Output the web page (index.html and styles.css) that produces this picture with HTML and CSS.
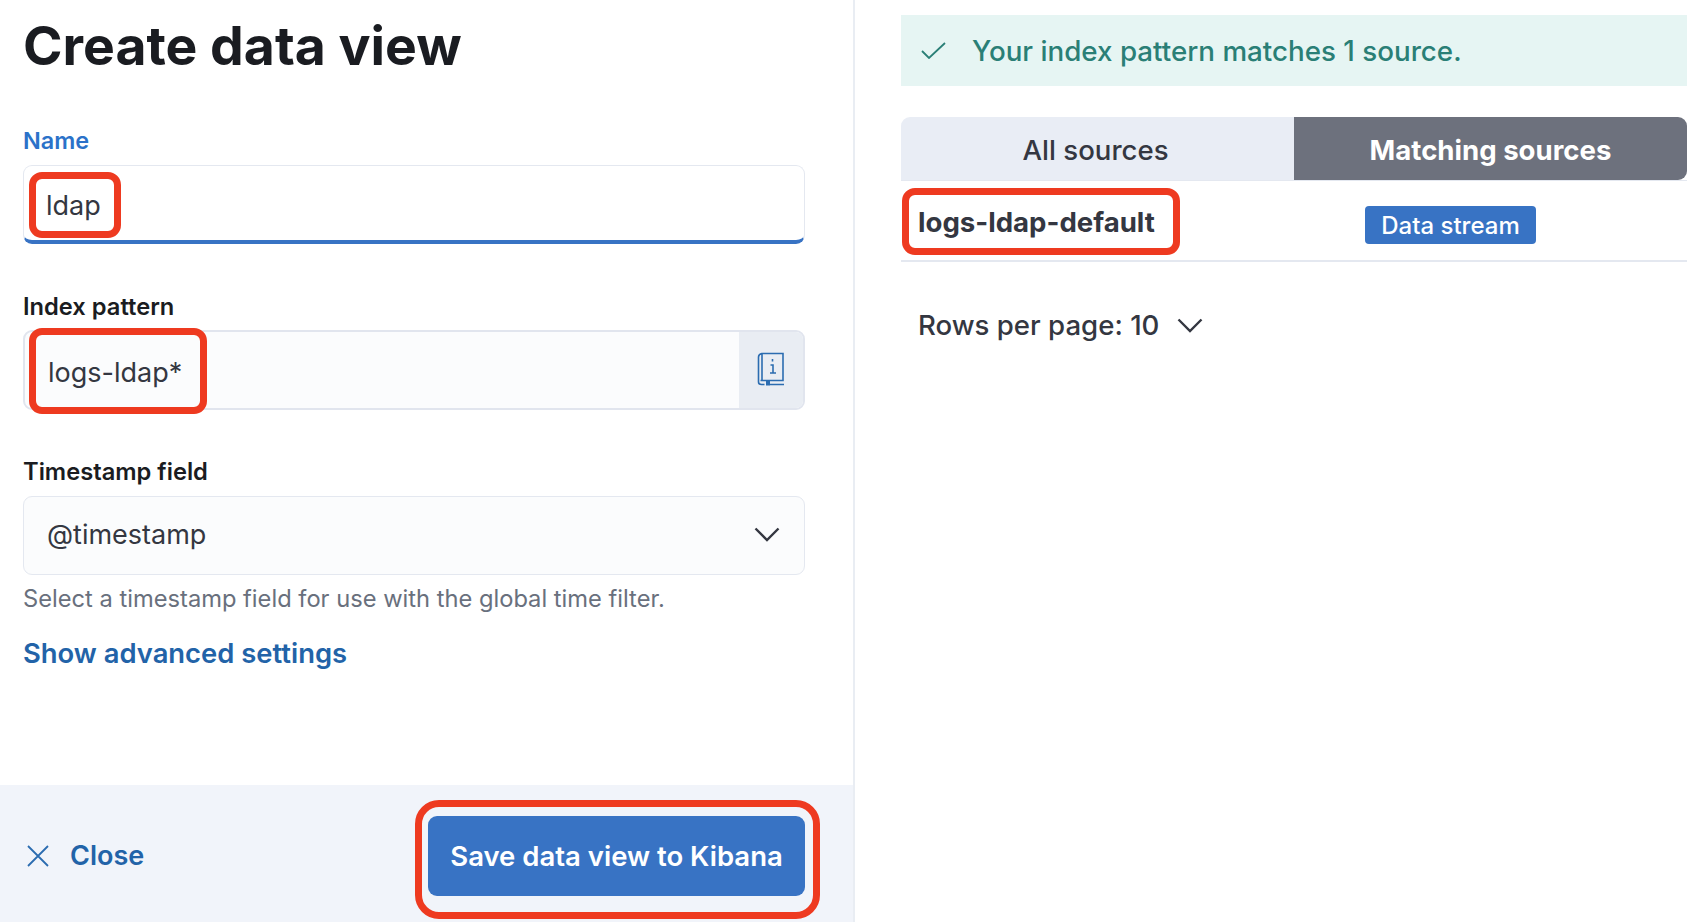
FILE: index.html
```html
<!DOCTYPE html>
<html>
  <head>
    <title>Create data view</title>
    <link rel="stylesheet" href="styles.css">
  </head>
  <body>
    <div class="page">
      <div class="flyout">
        <div class="form">
          <h1>Create data view</h1>
          <label class="label label-name">Name</label>
          <div class="input input-name">ldap</div>
          <label class="label label-index">Index pattern</label>
          <div class="input input-index">
            <span class="input-text">logs-ldap*</span>
            <span class="addon">
              <svg width="28" height="34" viewBox="0 0 28 34" fill="none" stroke="#2b6cb0" stroke-width="1.6">
                <path d="M5 1.500h21v27H5zM5 1.500C2.500 2 1.500 3.500 1.500 5v25c0 1.500 1 2.500 3 2.500h3M13 32.500h14M5 28.500H3.500"/>
                <path d="M9 29h4v4.500H9z" fill="#2b6cb0" stroke="none"/>
                <path d="M15.500 7v2.500M13.500 13h2.500v7.500M13 21h6"/>
              </svg>
            </span>
          </div>
          <label class="label label-time">Timestamp field</label>
          <div class="input input-time">
            <span class="input-text">@timestamp</span>
            <svg class="chevron" width="26" height="15" viewBox="0 0 26 15" fill="none" stroke="#343741" stroke-width="2.400">
              <path d="M1.500 1.500L13 13L24.500 1.500"/>
            </svg>
          </div>
          <p class="help">Select a timestamp field for use with the global time filter.</p>
          <a class="advanced">Show advanced settings</a>
        </div>
        <div class="footer">
          <a class="close">
            <svg width="24" height="22" viewBox="0 0 24 22" fill="none" stroke="#2b6cb0" stroke-width="1.800">
              <path d="M2 1l20 20M22 1L2 21"/>
            </svg>
            Close
          </a>
          <button class="save">Save data view to Kibana</button>
        </div>
      </div>

      <div class="results">
        <div class="callout">
          <svg width="25" height="17" viewBox="0 0 25 17" fill="none" stroke="#2a7f76" stroke-width="1.800">
            <path d="M1 9l7 7L24 1"/>
          </svg>
          <span>Your index pattern matches 1 source.</span>
        </div>
        <div class="tabs">
          <div class="tab tab-all">All sources</div>
          <div class="tab tab-on">Matching sources</div>
        </div>
        <div class="row">
          <span class="source">logs-ldap-default</span>
          <span class="badge">Data stream</span>
        </div>
        <div class="pager">
          Rows per page: 10
          <svg width="26" height="15" viewBox="0 0 26 15" fill="none" stroke="#343741" stroke-width="2.400">
            <path d="M1.500 1.500L13 13L24.500 1.500"/>
          </svg>
        </div>
      </div>

      <!-- red marks drawn over the shot -->
      <div class="mark mark-name"></div>
      <div class="mark mark-index"></div>
      <div class="mark mark-save"></div>
      <div class="mark mark-source"></div>
    </div>
  </body>
</html>
```

FILE: styles.css
```css
html, body {
  margin: 0;
  height: 100%;
  background: #ffffff;
  overflow: hidden;
}

body {
  font-family: 'Inter', 'Liberation Sans', sans-serif;
  color: #343741;
}

.page {
  position: relative;
  display: flex;
  width: 1700px;
  height: 922px;
}

.flyout {
  display: flex;
  flex-direction: column;
  justify-content: space-between;
  box-sizing: border-box;
  width: 855px;
  height: 922px;
  border-right: 2px solid #e9edf3;
}

.form {
  padding: 0 48px 0 23px;
}

h1 {
  margin: 0;
  padding-top: 11px;
  font-size: 53.5px;
  line-height: 70px;
  font-weight: 700;
  color: #1a1c21;
}

.label {
  display: block;
  font-size: 23.7px;
  line-height: 28px;
  font-weight: 600;
  color: #1a1c21;
}

.label-name {
  margin-top: 46px;
  font-size: 23.4px;
  color: #2b72c9;
}

.label-index {
  margin-top: 49px;
}

.label-time {
  margin-top: 48px;
}

.input {
  display: flex;
  align-items: center;
  justify-content: space-between;
  box-sizing: border-box;
  margin-top: 10px;
  border: 1px solid #e4e8f0;
  border-radius: 9px;
  font-size: 27px;
  color: #343741;
  overflow: hidden;
}

.input-name {
  height: 79px;
  padding: 4px 0 0 22px;
  background: #ffffff;
  border-bottom: 4px solid #3873c4;
}

.input-index {
  height: 80px;
  margin-top: 9px;
  background: #fbfcfd;
  border: 2px solid #e1e5ee;
}

.input-index .input-text {
  padding: 4px 0 0 23px;
}

.addon {
  display: flex;
  align-items: center;
  justify-content: center;
  box-sizing: border-box;
  width: 64px;
  height: 100%;
  padding-bottom: 2px;
  background: #e9edf3;
}

.input-time {
  height: 79px;
  padding: 0 24px 2px 23px;
  background: #fbfcfd;
}

.help {
  margin: 10px 0 0;
  font-size: 23.7px;
  line-height: 28px;
  color: #69707d;
}

.advanced {
  display: block;
  margin-top: 23px;
  font-size: 27.4px;
  line-height: 34px;
  font-weight: 600;
  color: #2263a8;
}

.footer {
  display: flex;
  align-items: center;
  justify-content: space-between;
  box-sizing: border-box;
  height: 137px;
  padding: 4px 48px 0 26px;
  background: #f1f4fa;
}

.close {
  display: flex;
  align-items: center;
  gap: 20px;
  font-size: 27px;
  font-weight: 600;
  color: #2263a8;
}

.save {
  width: 377px;
  height: 80px;
  border: none;
  border-radius: 9px;
  background: #3873c4;
  color: #ffffff;
  font-family: inherit;
  font-size: 27.5px;
  font-weight: 600;
}

.results {
  width: 786px;
  margin-left: 46px;
  padding-top: 15px;
}

.callout {
  display: flex;
  align-items: center;
  gap: 26px;
  height: 71px;
  padding-left: 20px;
  background: #e6f5f3;
  color: #2a7f76;
  font-size: 27.75px;
  font-weight: 500;
}

.tabs {
  display: flex;
  height: 63px;
  margin-top: 31px;
  border-radius: 9px 9px 0 0;
  overflow: hidden;
  box-shadow: 0 1px 0 #e4e8f0;
}

.tab {
  display: flex;
  align-items: center;
  justify-content: center;
  box-sizing: border-box;
  width: 50%;
  padding-top: 2px;
  background: #e9edf5;
  font-size: 27.6px;
  font-weight: 500;
  color: #343741;
}

.tab-all {
  padding-right: 4px;
}

.tab-on {
  background: #6d717d;
  border-radius: 0 0 9px 0;
  color: #ffffff;
  font-weight: 700;
}

.row {
  display: flex;
  align-items: center;
  height: 80px;
  padding-left: 17px;
  border-bottom: 2px solid #e4e8f0;
}

.source {
  width: 447px;
  padding-top: 3px;
  font-size: 27.6px;
  font-weight: 700;
  color: #343741;
}

.badge {
  display: flex;
  align-items: center;
  justify-content: center;
  width: 171px;
  height: 38px;
  margin-top: 10px;
  border-radius: 4px;
  background: #3873c4;
  color: #ffffff;
  font-size: 24px;
  font-weight: 500;
}

.pager {
  display: flex;
  align-items: center;
  gap: 18px;
  margin-top: 46px;
  padding-left: 17px;
  font-size: 27.6px;
  line-height: 34px;
  font-weight: 500;
  color: #343741;
}

.mark {
  position: absolute;
  box-sizing: border-box;
  border: 7px solid #ee3a20;
  border-radius: 13px;
}

.mark-name {
  left: 29px;
  top: 172px;
  width: 92px;
  height: 66px;
}

.mark-index {
  left: 29px;
  top: 328px;
  width: 178px;
  height: 86px;
}

.mark-save {
  left: 415px;
  top: 800px;
  width: 405px;
  height: 119px;
  border-radius: 24px;
}

.mark-source {
  left: 902px;
  top: 188px;
  width: 278px;
  height: 67px;
}
```
